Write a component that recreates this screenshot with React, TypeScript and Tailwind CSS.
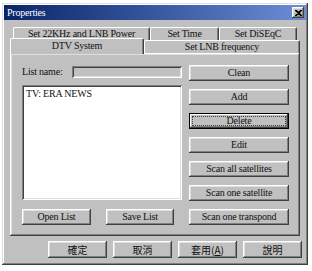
import React from "react";

const raised =
  "shadow-[inset_-1px_-1px_#404040,inset_1px_1px_#ffffff,inset_-2px_-2px_#808080,inset_2px_2px_#dfdfdf]";
const sunken =
  "shadow-[inset_1px_1px_#808080,inset_-1px_-1px_#ffffff,inset_2px_2px_#404040,inset_-2px_-2px_#dfdfdf]";

function Btn({ label, w, focused }: { label: string; w: string; focused?: boolean }) {
  if (focused) {
    return (
      <div className={`${w} h-[16px] border border-black bg-[#c0c0c0] flex`}>
        <div className="flex-1 flex p-[2px] shadow-[inset_-1px_-1px_#404040,inset_1px_1px_#ffffff,inset_-2px_-2px_#808080]">
          <div className="flex-1 flex items-center justify-center border border-dotted border-[#404040] leading-none">
            {label}
          </div>
        </div>
      </div>
    );
  }
  return (
    <div className={`${w} h-[16px] bg-[#c0c0c0] flex items-center justify-center leading-none ${raised}`}>
      {label}
    </div>
  );
}

function Tab({ label, w, h = "h-[13px]", extra = "" }: { label: string; w: string; h?: string; extra?: string }) {
  return (
    <div
      className={`${w} ${h} ${extra} bg-[#c0c0c0] border-t border-l border-white rounded-tl-[2px] rounded-tr-[2px] shadow-[inset_-1px_0_#808080] border-r border-r-[#404040] flex items-center justify-center leading-none`}
    >
      {label}
    </div>
  );
}

export default function App() {
  const rightButtons = [
    "Clean",
    "Add",
    "Delete",
    "Edit",
    "Scan all satellites",
    "Scan one satellite",
    "Scan one transpond",
  ];

  return (
    <div className="w-[312px] h-[271px] bg-white pt-[3px] pl-[2px] [font-family:'Liberation_Serif','Noto_Sans_CJK_TC',serif] text-[10px] tracking-[-0.2px] text-[#111]">
      <div
        className={`w-[306px] h-[262px] bg-[#c0c0c0] p-[2px] flex flex-col shadow-[inset_-1px_-1px_#404040,inset_1px_1px_#dfdfdf,inset_-2px_-2px_#808080,inset_2px_2px_#ffffff]`}
      >
        {/* title bar */}
        <div className="h-[15px] bg-linear-to-r from-[#0a246a] to-[#6d8dd6] flex items-center justify-between pl-[3px] pr-[2px]">
          <span className="text-white text-[10px]">Properties</span>
          <div className={`w-[12px] h-[11px] bg-[#c0c0c0] flex items-center justify-center ${raised}`}>
            <svg width="7" height="6" viewBox="0 0 7 6">
              <path d="M0 0L6 6M1 0L7 6M6 0L0 6M7 0L1 6" stroke="#000" strokeWidth="1.1" />
            </svg>
          </div>
        </div>

        {/* tabs back row */}
        <div className="mt-[7px] pl-[9px] flex">
          <Tab label="Set 22KHz and LNB Power" w="w-[137px]" />
          <Tab label="Set Time" w="w-[69px]" />
          <Tab label="Set DiSEqC" w="w-[78px]" />
        </div>

        {/* tabs front row */}
        <div className="-mt-[2px] pl-[6px] flex items-end">
          <Tab label="DTV System" w="w-[134px]" h="h-[16px]" extra="relative z-10 pb-[2px]" />
          <Tab label="Set LNB frequency" w="w-[156px]" extra="mb-px" />
        </div>

        {/* panel */}
        <div className={`-mt-px ml-[6px] w-[290px] h-[183px] bg-[#c0c0c0] flex gap-[7px] pl-[12px] pt-[12px] ${raised}`}>
          <div className="w-[160px] flex flex-col pt-px">
            <div className="h-[12px] flex items-center">
              <span className="w-[50px] leading-none">List name:</span>
              <div className={`w-[110px] h-[12px] bg-[#c0c0c0] ${sunken}`} />
            </div>
            <div className={`mt-[7px] h-[115px] bg-white px-[3px] py-[3px] ${sunken}`}>
              <div className="leading-none pl-px pt-px">TV: ERA NEWS</div>
            </div>
            <div className="mt-[9px] flex gap-[15px]">
              <Btn label="Open List" w="w-[69px]" />
              <Btn label="Save List" w="w-[68px]" />
            </div>
          </div>
          <div className="w-[100px] flex flex-col gap-[8px]">
            {rightButtons.map((b) => (
              <Btn key={b} label={b} w="w-[100px]" focused={b === "Delete"} />
            ))}
          </div>
        </div>

        {/* dialog buttons */}
        <div className="mt-[5px] pl-[44px] flex gap-[6px] [font-family:'Noto_Sans_CJK_TC',sans-serif] text-[10px] tracking-normal">
          {["確定", "取消", "套用(A)", "說明"].map((b) => (
            <div key={b} className={`w-[59px] h-[17px] bg-[#c0c0c0] flex items-center justify-center leading-none ${raised}`}>
              {b === "套用(A)" ? (
                <span>
                  套用(<span className="underline">A</span>)
                </span>
              ) : (
                b
              )}
            </div>
          ))}
        </div>
      </div>
    </div>
  );
}
